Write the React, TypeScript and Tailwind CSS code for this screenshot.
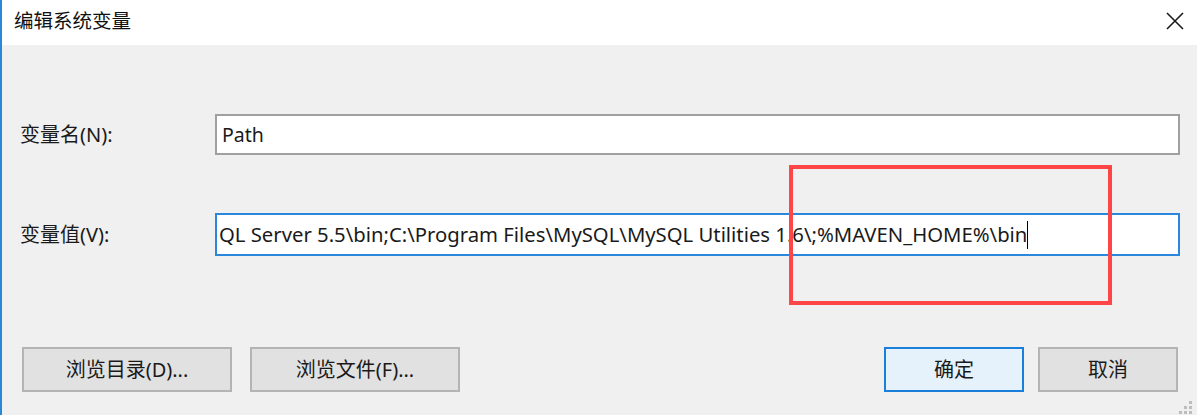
const font = { fontFamily: '"Noto Sans", "Noto Sans CJK SC", sans-serif' };

const value = 'QL Server 5.5\\bin;C:\\Program Files\\MySQL\\MySQL Utilities 1.6\\;%MAVEN_HOME%\\bin';

function DialogButton({ label, primary }: { label: string; primary?: boolean }) {
  return (
    <button
      className={
        primary
          ? 'h-[45px] w-[140px] border-2 border-[#1a7fd9] bg-[#e5f1fb] text-[20px] text-[#1a1a1a]'
          : 'h-[45px] w-[140px] border-2 border-[#b4b4b4] bg-[#e1e1e1] text-[20px] text-[#1a1a1a]'
      }
    >
      {label}
    </button>
  );
}

export default function App() {
  return (
    <div
      className="relative w-[1197px] h-[415px] overflow-hidden bg-[#f0f0f0] border-l-2 border-[#2b88d8]"
      style={font}
    >
      {/* title bar */}
      <div className="h-[45px] bg-white flex items-center justify-between pl-[12px] pr-[14px]">
        <span className="text-[19.5px] text-[#111] -mt-[3px]">编辑系统变量</span>
        <svg width="18" height="18" viewBox="0 0 18 18" className="-mr-[1px] -mt-[4px]">
          <path d="M1 1 L17 17 M17 1 L1 17" stroke="#1a1a1a" strokeWidth="1.6" />
        </svg>
      </div>

      {/* fields */}
      <div className="pt-[69px] pl-[18px] pr-[17px]">
        <div className="grid grid-cols-[195px_1fr] items-center">
          <span className="text-[20px] text-[#1a1a1a]">变量名(N):</span>
          <div className="h-[41px] bg-white border-2 border-[#a0a0a0] flex items-center px-[5px] text-[19.5px] text-[#1a1a1a]">
            Path
          </div>
        </div>

        <div className="grid grid-cols-[195px_1fr] items-center mt-[58px]">
          <span className="text-[20px] text-[#1a1a1a]">变量值(V):</span>
          <div className="h-[43px] bg-white border-2 border-[#2a87dc] flex items-center overflow-hidden pl-[2px] text-[20.3px] text-[#1a1a1a]">
            <span className="whitespace-nowrap">{value}</span>
            <span className="w-[1px] h-[28px] bg-black shrink-0" />
          </div>
        </div>
      </div>

      {/* buttons */}
      <div className="flex items-center mt-[91px] pl-[20px] pr-[19px]">
        <div className="flex gap-[18px]">
          <button className="h-[45px] w-[210px] border-2 border-[#b4b4b4] bg-[#e1e1e1] text-[20px] text-[#1a1a1a]">
            浏览目录(D)...
          </button>
          <button className="h-[45px] w-[210px] border-2 border-[#b4b4b4] bg-[#e1e1e1] text-[20px] text-[#1a1a1a]">
            浏览文件(F)...
          </button>
        </div>
        <div className="ml-auto flex gap-[14px]">
          <DialogButton label="确定" primary />
          <DialogButton label="取消" />
        </div>
      </div>

      {/* highlight annotation */}
      <div className="absolute left-[787px] top-[165px] w-[323px] h-[140px] border-4 border-[#ff4545]" />

      {/* resize grip */}
      <svg className="absolute right-[4px] bottom-[0px]" width="15" height="15" viewBox="0 0 15 15">
        <rect x="11" y="1" width="3" height="3" fill="#bdbdbd" />
        <rect x="6" y="6" width="3" height="3" fill="#bdbdbd" />
        <rect x="11" y="6" width="3" height="3" fill="#bdbdbd" />
        <rect x="1" y="11" width="3" height="3" fill="#bdbdbd" />
        <rect x="6" y="11" width="3" height="3" fill="#bdbdbd" />
        <rect x="11" y="11" width="3" height="3" fill="#bdbdbd" />
      </svg>
    </div>
  );
}
